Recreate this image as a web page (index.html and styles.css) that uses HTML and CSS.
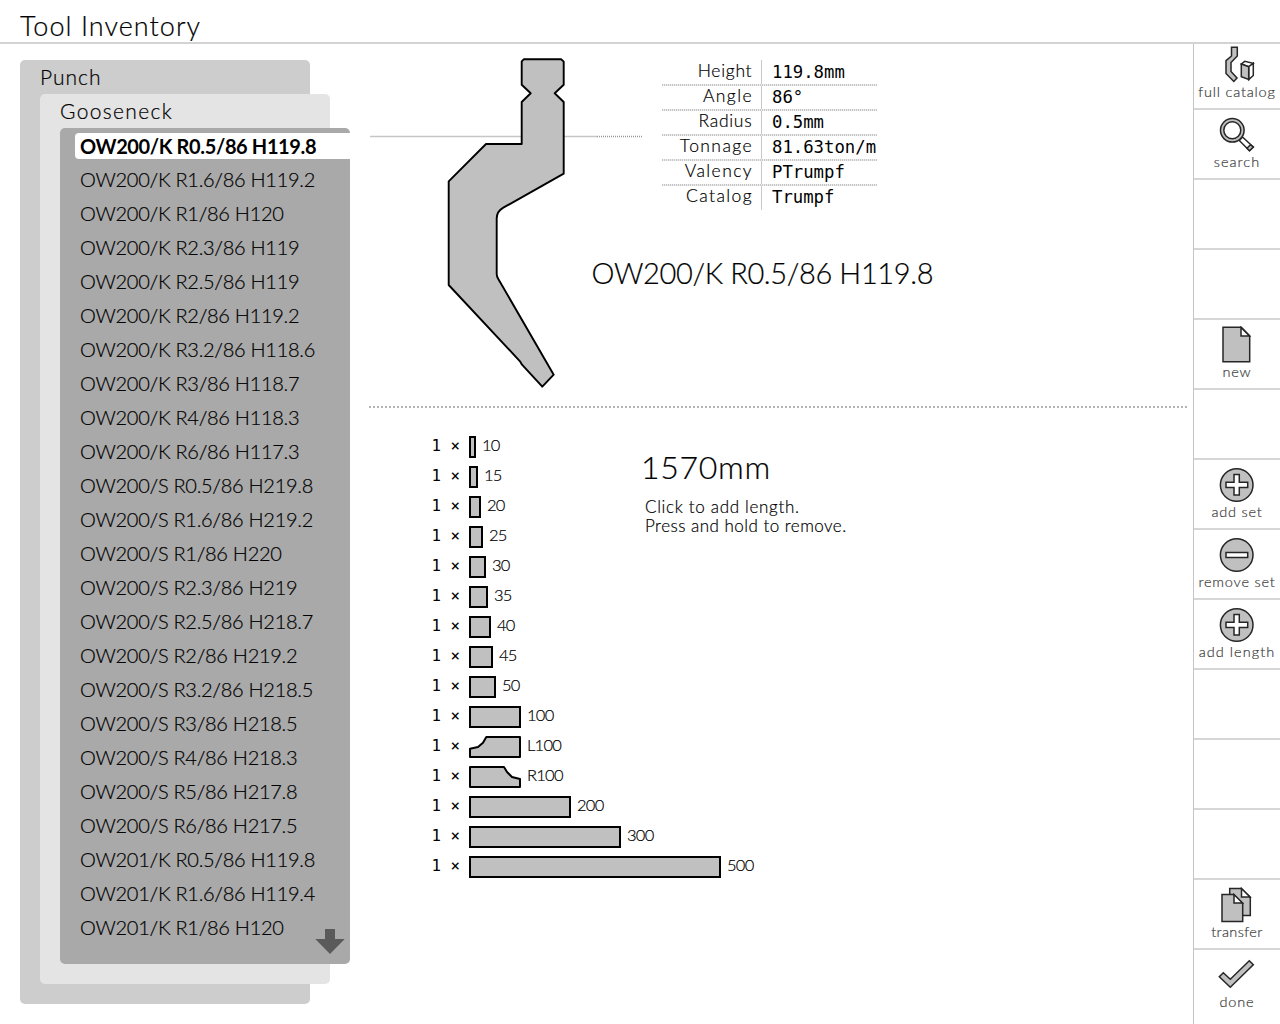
FILE: index.html
```html
<!DOCTYPE html>
<html lang="en">
<head>
<meta charset="utf-8">
<title>Tool Inventory</title>
<link rel="stylesheet" href="styles.css">
</head>
<body>
<header class="title-bar"><h1>Tool Inventory</h1></header>
<main class="layout">
  <nav class="browser">
    <section class="panel panel-type">
      <h2>Punch</h2>
      <section class="panel panel-group">
        <h2>Gooseneck</h2>
        <section class="panel panel-tools">
          <ul class="tools">
            <li class="selected">OW200/K R0.5/86 H119.8</li>
            <li>OW200/K R1.6/86 H119.2</li>
            <li>OW200/K R1/86 H120</li>
            <li>OW200/K R2.3/86 H119</li>
            <li>OW200/K R2.5/86 H119</li>
            <li>OW200/K R2/86 H119.2</li>
            <li>OW200/K R3.2/86 H118.6</li>
            <li>OW200/K R3/86 H118.7</li>
            <li>OW200/K R4/86 H118.3</li>
            <li>OW200/K R6/86 H117.3</li>
            <li>OW200/S R0.5/86 H219.8</li>
            <li>OW200/S R1.6/86 H219.2</li>
            <li>OW200/S R1/86 H220</li>
            <li>OW200/S R2.3/86 H219</li>
            <li>OW200/S R2.5/86 H218.7</li>
            <li>OW200/S R2/86 H219.2</li>
            <li>OW200/S R3.2/86 H218.5</li>
            <li>OW200/S R3/86 H218.5</li>
            <li>OW200/S R4/86 H218.3</li>
            <li>OW200/S R5/86 H217.8</li>
            <li>OW200/S R6/86 H217.5</li>
            <li>OW201/K R0.5/86 H119.8</li>
            <li>OW201/K R1.6/86 H119.4</li>
            <li>OW201/K R1/86 H120</li>
          </ul>
          <svg class="scroll-down" width="30" height="25" viewBox="0 0 30 25"><path d="M10 0h10v10h9.7L15 25 .3 10H10z"/></svg>
        </section>
      </section>
    </section>
  </nav>

  <div class="content">
    <section class="overview">
      <svg class="profile" width="222" height="340" viewBox="0 0 222 340">
        <path class="guide" d="M0 86.5H227"/>
        <path class="guide guide-dots" d="M227 86.5H272"/>
        <path class="body" d="M151.7 11.3L153.7 9.3H191.3L193.7 11.7V34.7L184.7 43.3L193.7 52V123.7L133.3 157.7Q126.7 161.5 126.7 168.5V224Q126.7 226.5 128.3 229L183.7 324.7L172.3 336.7L152 314.7L150 311.3L78.7 235V131.3L116 94H151.7V52L160.7 43.3L151.7 34.7Z"/>
      </svg>
      <div class="info">
        <dl class="details">
          <div><dt class="snug">Height</dt><dd>119.8mm</dd></div>
          <div><dt>Angle</dt><dd>86°</dd></div>
          <div><dt class="snug">Radius</dt><dd>0.5mm</dd></div>
          <div><dt>Tonnage</dt><dd>81.63ton/m</dd></div>
          <div><dt>Valency</dt><dd>PTrumpf</dd></div>
          <div><dt>Catalog</dt><dd>Trumpf</dd></div>
        </dl>
        <h3>OW200/K R0.5/86 H119.8</h3>
      </div>
    </section>

    <section class="stock">
      <ul class="lengths">
        <li><span class="count">1 ×</span><i class="bar" style="width:7px"></i><span>10</span></li>
        <li><span class="count">1 ×</span><i class="bar" style="width:9px"></i><span>15</span></li>
        <li><span class="count">1 ×</span><i class="bar" style="width:12px"></i><span>20</span></li>
        <li><span class="count">1 ×</span><i class="bar" style="width:14px"></i><span>25</span></li>
        <li><span class="count">1 ×</span><i class="bar" style="width:17px"></i><span>30</span></li>
        <li><span class="count">1 ×</span><i class="bar" style="width:19px"></i><span>35</span></li>
        <li><span class="count">1 ×</span><i class="bar" style="width:22px"></i><span>40</span></li>
        <li><span class="count">1 ×</span><i class="bar" style="width:24px"></i><span>45</span></li>
        <li><span class="count">1 ×</span><i class="bar" style="width:27px"></i><span>50</span></li>
        <li><span class="count">1 ×</span><i class="bar" style="width:52px"></i><span>100</span></li>
        <li><span class="count">1 ×</span><svg class="horn" width="52" height="22" viewBox="0 0 52 22"><path d="M1 12.7L9 11L14 6.7L17.3 1H51V21H1Z"/></svg><span>L100</span></li>
        <li><span class="count">1 ×</span><svg class="horn" width="52" height="22" viewBox="0 0 52 22"><path d="M1 1H35L38 6L43 11L51 13V21H1Z"/></svg><span>R100</span></li>
        <li><span class="count">1 ×</span><i class="bar" style="width:102px"></i><span>200</span></li>
        <li><span class="count">1 ×</span><i class="bar" style="width:152px"></i><span>300</span></li>
        <li><span class="count">1 ×</span><i class="bar" style="width:252px"></i><span>500</span></li>
      </ul>
      <div class="summary">
        <p class="total">1570mm</p>
        <p class="hint">Click to add length.</p>
        <p class="hint hint-second">Press and hold to remove.</p>
      </div>
    </section>
  </div>

  <aside class="actions">
    <button class="first"><svg viewBox="0 0 86 38"><path d="M37.5 2.3H43.3V11L37 17.5V26.5L43 33L39.8 36.5L32 28.5V15.7L37.5 11Z"/><path class="paper" d="M47.3 19L50.7 16.3L59.3 18.3L54.7 21.7ZM54.7 21.7L59.3 18.3V30.5L54.7 34.5Z"/><path d="M47.3 19L54.7 21.7V34.5L47.3 31.7Z"/></svg><span class="wide">full catalog</span></button>
    <button><svg viewBox="0 0 86 38"><path class="paper" d="M48.5 22L59.3 32L55.5 35.7L45.3 25.5Z"/><path d="M56.5 29.8L59.3 32L55.5 35.7L53 33.2Z"/><circle cx="38.3" cy="15.3" r="11.8"/><circle class="paper" cx="38.3" cy="15.3" r="8.5"/></svg><span class="wider">search</span></button>
    <button></button>
    <button></button>
    <button><svg viewBox="0 0 86 38"><path d="M29 2.3H47.3L55.7 10.7V36.7H29Z"/><path class="paper" d="M47 2.5V11H55.5Z"/></svg><span class="wide">new</span></button>
    <button></button>
    <button><svg viewBox="0 0 86 38"><circle cx="42.7" cy="20" r="16.3"/><path class="paper" d="M40 9.5H45.3V17.3H53.7V22.5H45.3V30H40V22.5H32V17.3H40Z"/></svg><span class="wide">add set</span></button>
    <button><svg viewBox="0 0 86 38"><circle cx="42.7" cy="20" r="16.3"/><path class="paper" d="M32 17.5H53.7V22.5H32Z"/></svg><span class="wide">remove set</span></button>
    <button><svg viewBox="0 0 86 38"><circle cx="42.7" cy="20" r="16.3"/><path class="paper" d="M40 9.5H45.3V17.3H53.7V22.5H45.3V30H40V22.5H32V17.3H40Z"/></svg><span class="wider">add length</span></button>
    <button></button>
    <button></button>
    <button></button>
    <button><svg viewBox="0 0 86 38"><path d="M35.7 3.5H47.3L56.3 12.3V30.5H35.7Z"/><path class="paper" d="M47.5 3.5V12H56Z"/><path d="M28 9.5H39.7L48.7 18.3V36.5H28Z"/><path class="paper" d="M40 9.5V18H48.5Z"/></svg><span>transfer</span></button>
    <button><svg viewBox="0 0 86 38"><path d="M55.3 5.7L59.3 9.7L36.3 32.3L25.3 21.7L29.3 17.7L36.3 24.3Z"/></svg><span class="wide">done</span></button>
  </aside>
</main>
</body>
</html>
```
FILE: styles.css
```css
* { box-sizing: border-box; margin: 0; padding: 0; }
body {
  width: 1280px;
  height: 1024px;
  overflow: hidden;
  background: #fff;
  color: #000;
  font-family: Lato, sans-serif;
  font-weight: 300;
  font-kerning: normal;
  -webkit-text-stroke: .2px currentColor;
}
ul { list-style: none; }
svg { display: block; flex: none; }

.title-bar {
  height: 44px;
  padding: 9px 0 0 20px;
  border-bottom: 2px solid #d3d3d3;
}
.title-bar h1 { font-size: 27px; line-height: 34px; font-weight: 300; letter-spacing: 1.05px; }

.layout { display: grid; grid-template-columns: 369px 824px 87px; height: 980px; }

/* Nested category panels */
.browser { padding: 16px 0 0 20px; }
.panel { width: 290px; border-radius: 5px; }
.panel .panel { margin-left: 20px; }
.panel h2 {
  height: 34px;
  padding-left: 20px;
  font-size: 21px;
  line-height: 34px;
  font-weight: 300;
  letter-spacing: 1.35px;
}
.panel-type > h2 { letter-spacing: 1px; }
.panel-type { height: 944px; background: #cdcdcd; }
.panel-group { height: 890px; background: #e4e4e4; }
.panel-tools { position: relative; height: 836px; background: #a9a9a9; overflow: hidden; }
.tools { display: flex; flex-direction: column; gap: 8px; padding: 5px 0 0 15px; }
.tools li {
  height: 26px;
  padding-left: 5px;
  font-size: 20px;
  line-height: 25px;
  letter-spacing: -.28px;
  white-space: nowrap;
}
.tools .selected {
  background: #fff;
  border-radius: 4px 0 0 4px;
  font-weight: 700;
  letter-spacing: -.37px;
  line-height: 26px;
  -webkit-text-stroke: 0;
}
.scroll-down { position: absolute; left: 255px; top: 801px; fill: #5a5a5a; }

/* Tool drawing and properties */
.overview {
  display: flex;
  width: 818px;
  height: 364px;
  padding: 6px 0 0 1px;
  border-bottom: 2px dotted #b4b4b4;
}
.profile { overflow: visible; }
.profile .body { fill: #c0c0c0; stroke: #000; stroke-width: 1.9; stroke-linejoin: round; }
.guide { stroke: #c6c6c6; stroke-width: 1.3; fill: none; }
.guide-dots { stroke: #999; stroke-dasharray: 1 1; }
.details {
  width: 215px;
  height: 150px;
  margin: 10px 0 0 70px;
  padding-top: 1px;
  background: linear-gradient(#c8c8c8, #c8c8c8) 99px 0 / 1px 100% no-repeat;
}
.details div { display: flex; height: 25px; padding-bottom: 1px; }
.details div:not(:last-child) {
  background: repeating-linear-gradient(90deg, #c6c6c6 0 1px, #ececec 1px 2px) 0 23px / 100% 2px no-repeat;
}
.details dt { width: 91px; text-align: right; font-size: 17.5px; line-height: 20px; letter-spacing: 1.4px; }
.details .snug { letter-spacing: .7px; width: 90.3px; margin-right: .7px; }
.details dd { margin-left: 19px; font: 17.3px/23px "DejaVu Sans Mono", monospace; -webkit-text-stroke: 0; }
.info h3 { margin-top: 45px; font-size: 29px; line-height: 36px; font-weight: 300; letter-spacing: -.37px; white-space: nowrap; text-indent: -.5px; }

/* Available lengths */
.stock { display: flex; padding: 24px 0 0 62px; }
.lengths { width: 210px; }
.lengths li {
  display: flex;
  height: 30px;
  font-size: 16.5px;
  line-height: 26px;
  letter-spacing: -.75px;
  white-space: nowrap;
}
.lengths .count {
  flex: none;
  width: 38px;
  padding-left: .6px;
  font: 15.8px/27px "DejaVu Sans Mono", monospace;
  letter-spacing: 0;
  -webkit-text-stroke: 0;
}
.bar, .horn { flex: none; height: 22px; margin: 4px 6px 0 0; }
.bar { border: 2px solid #000; background: #c0c0c0; }
.horn path { fill: #c0c0c0; stroke: #000; stroke-width: 2; stroke-linejoin: round; }
.summary { padding-top: 15px; }
.total { font-size: 32px; line-height: 40px; letter-spacing: .7px; }
.hint { padding-left: 4px; font-size: 17px; line-height: 19px; letter-spacing: .68px; white-space: nowrap; }
.total + .hint { margin-top: 10px; }
.hint-second { letter-spacing: .48px; }

/* Action column */
.actions { display: flex; flex-direction: column; border-left: 1px solid #c4c4c4; }
.actions button {
  display: flex;
  flex: none;
  flex-direction: column;
  justify-content: flex-end;
  align-items: center;
  height: 70px;
  padding-bottom: 7px;
  border: 0;
  border-bottom: 2px solid #d6d6d6;
  background: #fff;
  color: #404040;
  font: 300 14.5px/18px Lato, sans-serif;
  letter-spacing: .4px;
  -webkit-text-stroke: .2px currentColor;
}
.actions .first { height: 66px; }
.actions button:last-child { border-bottom-color: transparent; }
.actions svg { width: 86px; height: 38px; fill: #c0c0c0; stroke: #262626; stroke-width: 1.5; }
.actions .paper { fill: #fff; }
.actions .wide { letter-spacing: .8px; }
.actions .wider { letter-spacing: 1.05px; }
```
